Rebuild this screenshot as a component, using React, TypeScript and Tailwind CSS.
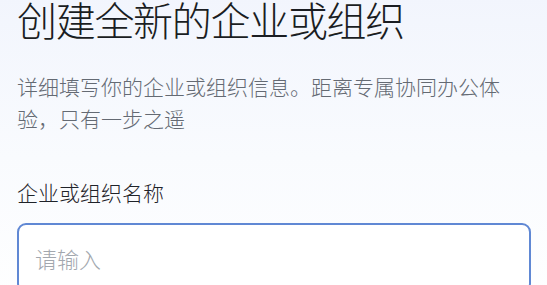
import { useState } from 'react';

export default function App() {
  const [name, setName] = useState('');

  return (
    <div
      className="min-h-[285px] w-full bg-gradient-to-b from-[#f2f5fd] via-[#f9fbfe] to-white px-[17px] pb-6"
      style={{ fontFamily: '"Noto Sans CJK SC", "Noto Sans", sans-serif' }}
    >
      <h1 className="-mt-[3px] text-[40px] leading-[44px] font-light text-[#1a1d22] tracking-[-1.3px]">创建全新的企业或组织</h1>
      <p className="mt-[29px] text-[21px] leading-[32px] font-light text-[#646a73]">
        详细填写你的企业或组织信息。距离专属协同办公体验，只有一步之遥
      </p>

      <label className="mt-[42px] block">
        <span className="block text-[21px] leading-[32px] font-light text-[#1f2329]">企业或组织名称</span>
        <input
          type="text"
          value={name}
          onChange={(e) => setName(e.target.value)}
          placeholder="请输入"
          className="mt-[15px] block h-[70px] w-[514px] rounded-[9px] border-2 border-[#6088d4] bg-white px-[16px] text-[22px] font-light text-[#1f2329] outline-none placeholder:text-[#a2a7ae]"
        />
      </label>
    </div>
  );
}
